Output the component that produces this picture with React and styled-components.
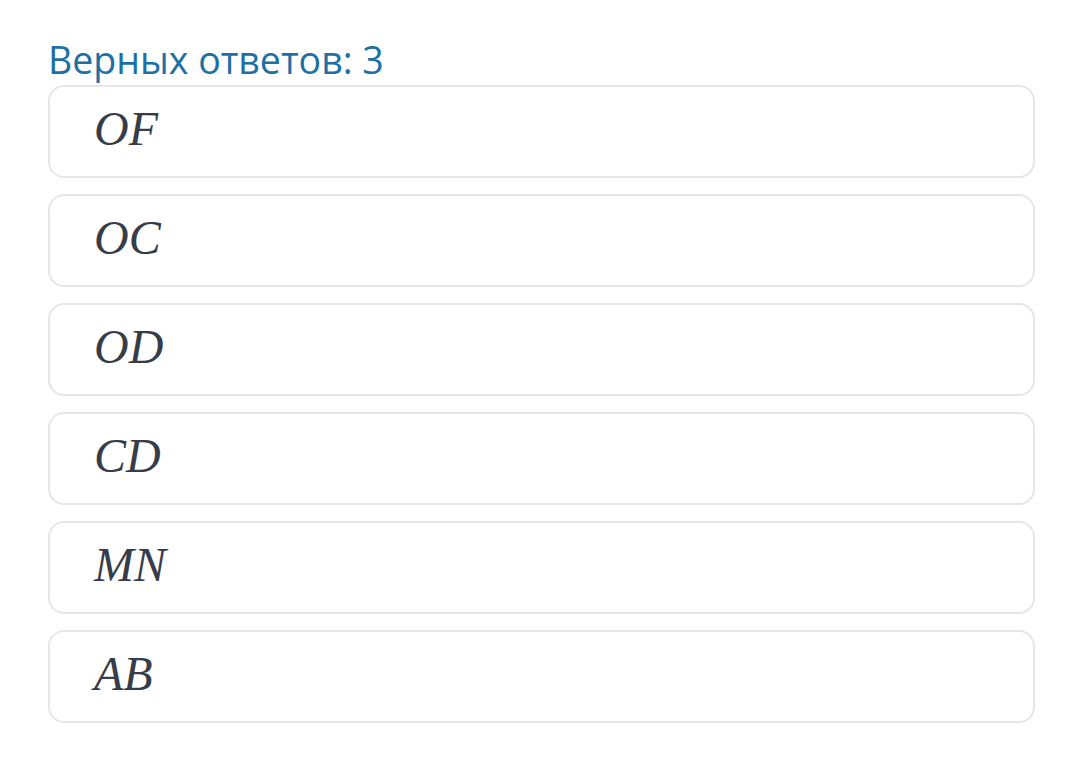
import React from "react";
import styled, { createGlobalStyle } from "styled-components";

const Global = createGlobalStyle`
  html, body { margin: 0; padding: 0; background: #ffffff; }
  body { font-family: "Open Sans", "Noto Sans", sans-serif; }
`;

const Page = styled.div`
  padding: 34px 45px 0 48px;
  display: flex;
  flex-direction: column;
`;

const Title = styled.div`
  font-family: "Open Sans", "Noto Sans", sans-serif;
  font-size: 37.5px;
  line-height: 51px;
  color: #1d6fa4;
`;

const List = styled.div`
  display: flex;
  flex-direction: column;
  gap: 16px;
`;

const Option = styled.div`
  box-sizing: border-box;
  height: 93px;
  border: 2px solid #e6e6e6;
  border-radius: 16px;
  display: flex;
  align-items: center;
  padding: 0 0 6px 44px;
`;

const MathText = styled.span`
  font-family: "Liberation Serif", "DejaVu Serif", serif;
  font-style: italic;
  font-size: 48px;
  color: #373d48;
`;

const options = ["OF", "OC", "OD", "CD", "MN", "AB"];

export default function App() {
  return (
    <>
      <Global />
      <Page>
        <Title>Верных ответов: 3</Title>
        <List>
          {options.map((o) => (
            <Option key={o}>
              <MathText>{o}</MathText>
            </Option>
          ))}
        </List>
      </Page>
    </>
  );
}
